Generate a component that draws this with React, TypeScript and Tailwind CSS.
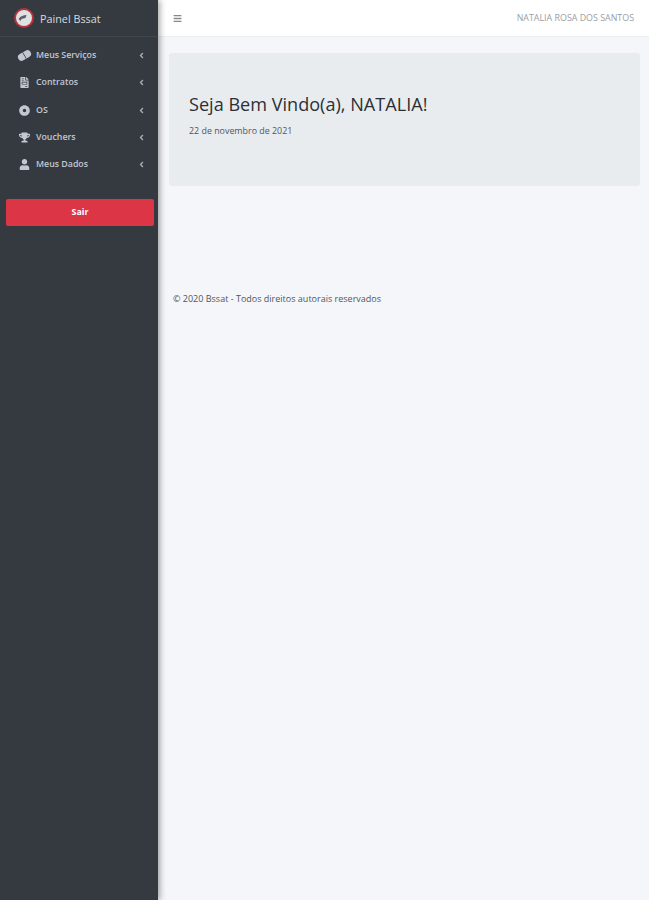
import { FaFileInvoice, FaDotCircle, FaTrophy, FaUser, FaAngleLeft, FaBars } from "react-icons/fa";
import type { ComponentType } from "react";

function Capsule({ className }: { className?: string }) {
  return (
    <svg viewBox="0 0 14 14" width="15" height="15" className={`shrink-0 ${className ?? ""}`} fill="currentColor">
      <g transform="rotate(-30 7 7)">
        <rect x="0.5" y="3.6" width="13" height="6.8" rx="3.4" />
        <rect x="6.6" y="3.6" width="0.7" height="6.8" fill="#343a40" />
      </g>
    </svg>
  );
}

const items: { label: string; Icon: ComponentType<{ className?: string }> }[] = [
  { label: "Meus Serviços", Icon: Capsule },
  { label: "Contratos", Icon: FaFileInvoice },
  { label: "OS", Icon: FaDotCircle },
  { label: "Vouchers", Icon: FaTrophy },
  { label: "Meus Dados", Icon: FaUser },
];

export default function App() {
  return (
    <div className="flex min-h-[900px] bg-[#f4f6f9] text-[#212529] font-['Open_Sans','Liberation_Sans',sans-serif]">
      <aside className="w-[158px] shrink-0 bg-[#343a40] shadow-[2px_0_6px_rgba(0,0,0,0.35)] z-10 flex flex-col">
        <div className="h-[37px] flex items-center pl-[14px] gap-[6px] border-b border-[#40464c]">
          <svg width="20" height="20" viewBox="0 0 20 20" className="shrink-0">
            <circle cx="10" cy="10" r="9" fill="#dfe1e3" stroke="#b5343c" strokeWidth="2" />
            <path d="M4.5 11c2-3 5-4 8-4l-1 3-4 1-1 2z" fill="#5b5f66" />
          </svg>
          <span className="text-[10.8px] text-[#d7dadd] pt-[3px]">Painel Bssat</span>
        </div>
        <nav className="flex flex-col pt-[5px] pl-[18px] pr-[12px]">
          {items.map(({ label, Icon }) => (
            <div key={label} className="h-[27.3px] flex items-center text-[#c2c7d0]">
              <span className="w-[12px] flex justify-center mr-[6px]">
                <Icon className="text-[11px]" />
              </span>
              <span className="text-[8.8px] font-semibold flex-1">{label}</span>
              <FaAngleLeft className="text-[9px] text-[#a9aeb5]" />
            </div>
          ))}
        </nav>
        <div className="pl-[6px] pr-[4px] mt-[20.5px]">
          <button className="block w-full h-[27px] pt-[1px] rounded-[2px] bg-[#dc3545] text-white text-[8.8px] font-bold">Sair</button>
        </div>
      </aside>
      <div className="flex-1 min-w-0 flex flex-col">
        <header className="h-[37px] bg-white border-b border-[#eceef0] flex items-center justify-between pl-[15px] pr-[15px]">
          <FaBars className="text-[9px] text-[#85898e]" />
          <span className="text-[8.9px] text-[#9a9ea3]">NATALIA ROSA DOS SANTOS</span>
        </header>
        <main className="pt-[16px] pl-[11px] pr-[9px]">
          <section className="h-[133px] bg-[#e9ecef] rounded-[3px] pl-[20px] pt-[38px]">
            <h1 className="text-[18.1px] leading-[26px] text-[#2b3035]">Seja Bem Vindo(a), NATALIA!</h1>
            <p className="text-[8.9px] mt-[7px] text-[#50565c]">22 de novembro de 2021</p>
          </section>
          <p className="mt-[106px] ml-[4px] text-[9px] text-[#50565c]">© 2020 Bssat - Todos direitos autorais reservados</p>
        </main>
      </div>
    </div>
  );
}
